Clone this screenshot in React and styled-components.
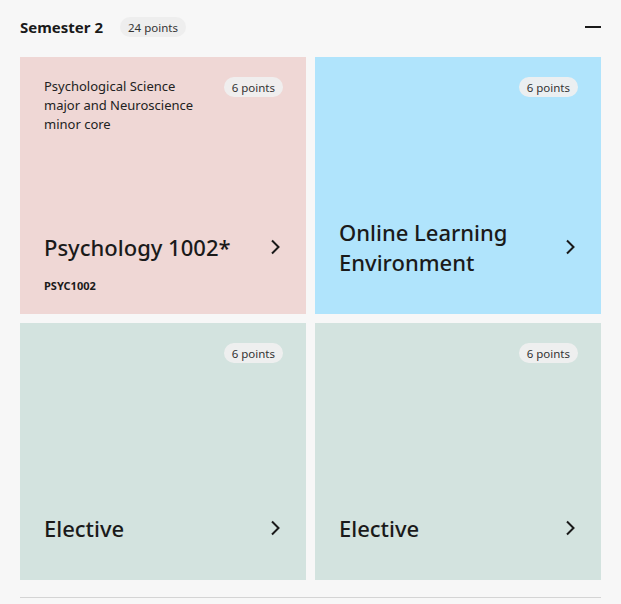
import React from 'react';
import styled, { createGlobalStyle } from 'styled-components';

const GlobalStyle = createGlobalStyle`
  html, body {
    margin: 0;
    padding: 0;
    background: #f7f7f7;
  }
  body {
    font-family: 'Noto Sans', 'Liberation Sans', sans-serif;
    color: #1a1a1a;
  }
`;

const Section = styled.section`
  width: 581px;
  padding: 0 20px;
`;

const Header = styled.div`
  display: flex;
  align-items: center;
  height: 57px;
  padding-bottom: 3px;
  box-sizing: border-box;
`;

const Heading = styled.h2`
  margin: 0;
  font-size: 15px;
  font-weight: 700;
  color: #1a1a1a;
`;

const Pill = styled.span`
  display: inline-flex;
  align-items: center;
  height: 20px;
  padding: 0 8px;
  border-radius: 10px;
  background: rgba(240, 240, 240, 0.92);
  font-size: 11.5px;
  color: #333;
  white-space: nowrap;
`;

const HeaderPill = styled(Pill)`
  margin-left: 17px;
  background: #eeeeee;
`;

const Collapse = styled.button`
  margin-left: auto;
  width: 16px;
  height: 16px;
  padding: 0;
  border: none;
  background: none;
  display: flex;
  align-items: center;
  cursor: pointer;

  &::before {
    content: '';
    display: block;
    width: 16px;
    height: 2px;
    background: #1a1a1a;
  }
`;

const Grid = styled.div`
  display: grid;
  grid-template-columns: 1fr 1fr;
  gap: 9px;
`;

const Card = styled.a`
  display: flex;
  flex-direction: column;
  justify-content: space-between;
  height: 257px;
  padding: 20px 23px 21px 24px;
  box-sizing: border-box;
  background: ${p => p.$bg};
  color: #1a1a1a;
  text-decoration: none;
`;

const CardTop = styled.div`
  display: flex;
  justify-content: space-between;
  align-items: flex-start;
  gap: 12px;
`;

const Requirement = styled.p`
  margin: 0;
  max-width: 155px;
  font-size: 13px;
  line-height: 19px;
  color: #222;
`;

const CardFooter = styled.div`
  display: flex;
  flex-direction: column;
`;

const TitleRow = styled.div`
  display: flex;
  align-items: center;
  justify-content: space-between;
`;

const Title = styled.h3`
  margin: 0;
  font-size: 22px;
  font-weight: 500;
  line-height: 30px;
  max-width: 200px;
`;

const Chevron = styled.svg`
  width: 10px;
  height: 16px;
  margin-right: 3px;
  flex-shrink: 0;
`;

/* the code line keeps a little more room when a unit has no code */
const Code = styled.span`
  margin-top: ${p => (p.$empty ? '0' : '17px')};
  height: ${p => (p.$empty ? '16px' : '14px')};
  font-size: 11px;
  line-height: 14px;
  font-weight: 700;
`;

const Divider = styled.hr`
  margin: 17px 0 0;
  border: none;
  border-top: 1px solid #d4d4d4;
`;

const units = [
  {
    bg: '#efd7d5',
    requirement: 'Psychological Science major and Neuroscience minor core',
    title: 'Psychology 1002*',
    code: 'PSYC1002',
  },
  { bg: '#b0e4fc', title: 'Online Learning Environment' },
  { bg: '#d3e3df', title: 'Elective' },
  { bg: '#d3e3df', title: 'Elective' },
];

const UnitCard = ({ unit }) => (
  <Card href="#" $bg={unit.bg}>
    <CardTop>
      <Requirement>{unit.requirement}</Requirement>
      <Pill>6 points</Pill>
    </CardTop>
    <CardFooter>
      <TitleRow>
        <Title>{unit.title}</Title>
        <Chevron viewBox="0 0 10 16" fill="none">
          <path d="M2 1.5 L8.5 8 L2 14.5" stroke="#1a1a1a" strokeWidth="2" />
        </Chevron>
      </TitleRow>
      <Code $empty={!unit.code}>{unit.code}</Code>
    </CardFooter>
  </Card>
);

export default function App() {
  return (
    <>
      <GlobalStyle />
      <Section>
        <Header>
          <Heading>Semester 2</Heading>
          <HeaderPill>24 points</HeaderPill>
          <Collapse aria-label="Collapse semester" />
        </Header>
        <Grid>
          {units.map((u, i) => (
            <UnitCard key={i} unit={u} />
          ))}
        </Grid>
        <Divider />
      </Section>
    </>
  );
}
